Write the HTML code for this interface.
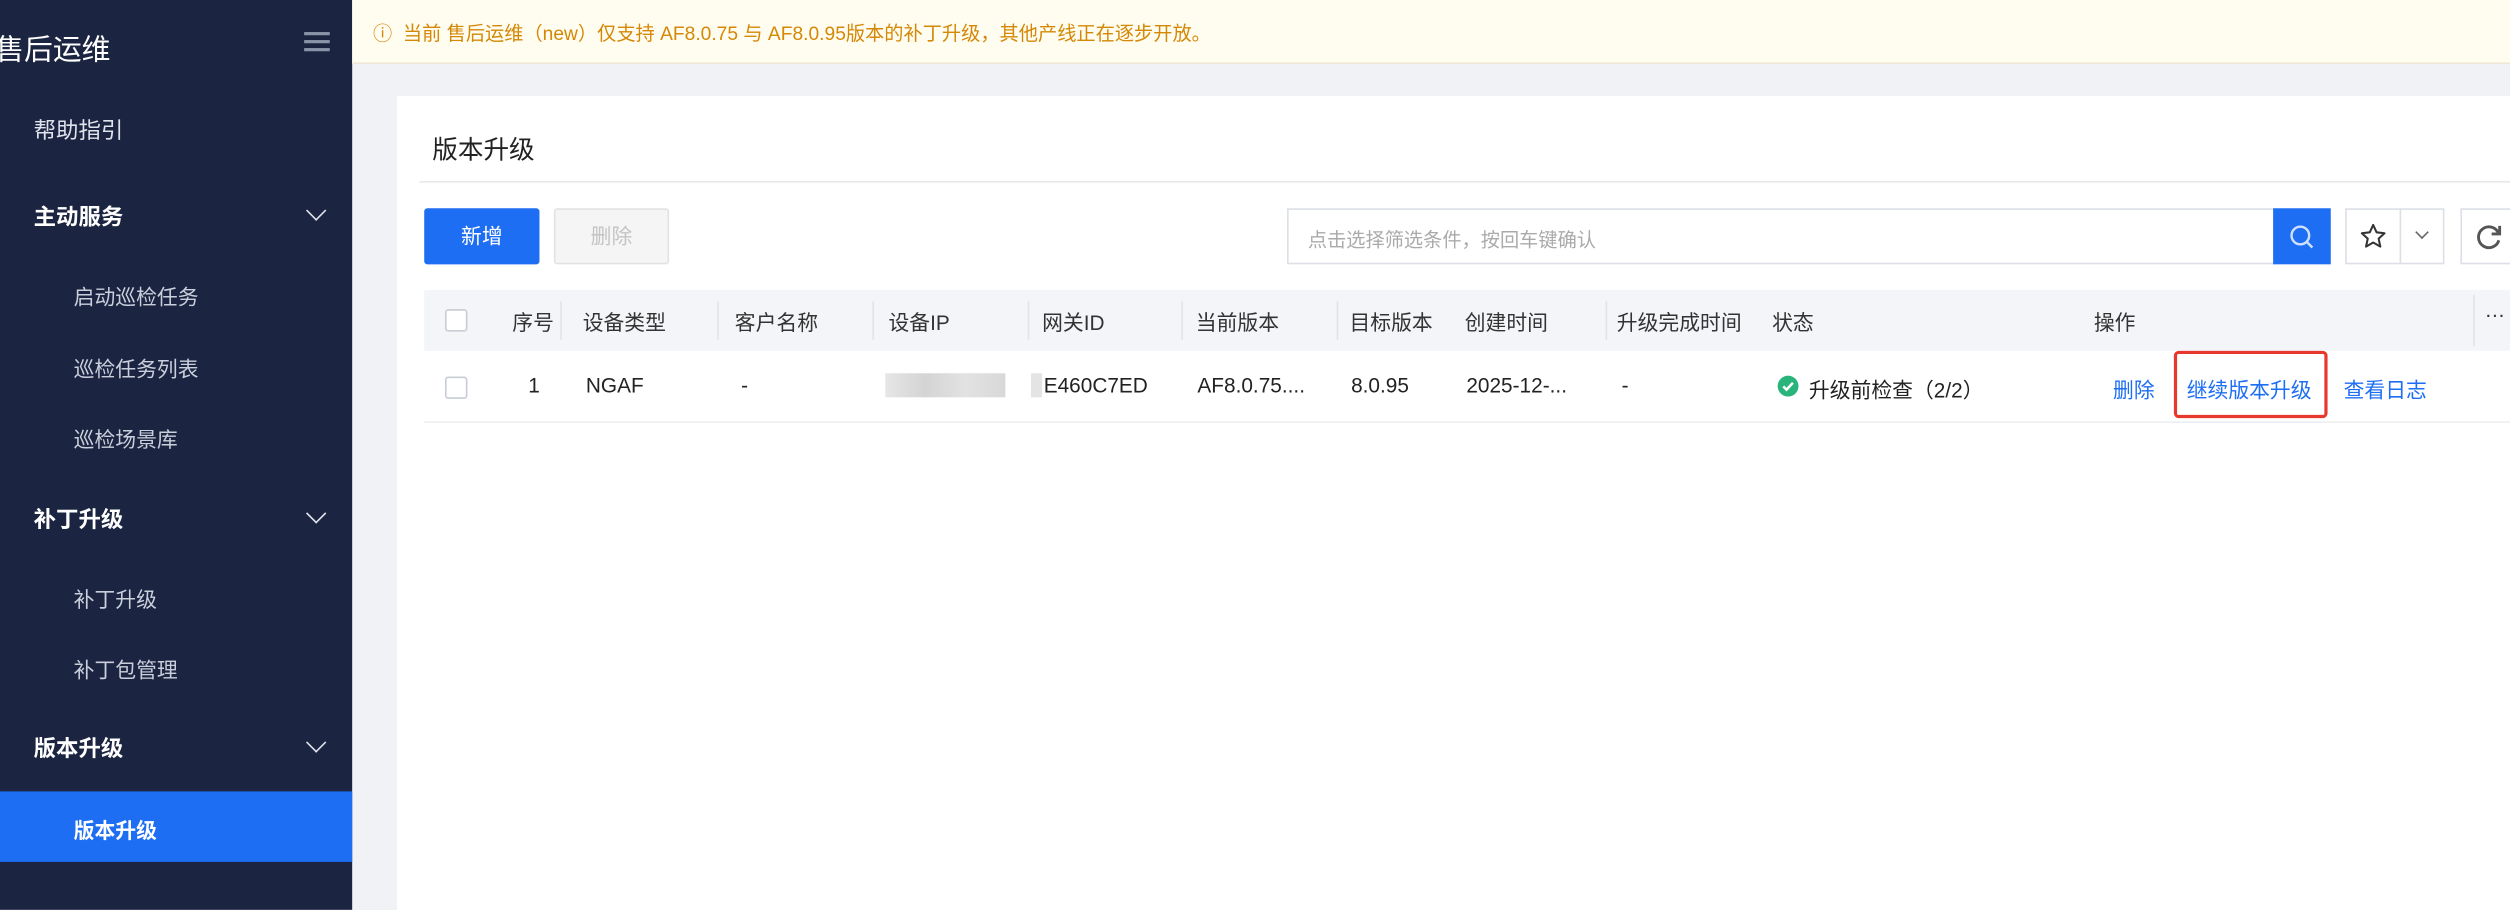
<!DOCTYPE html>
<html><head><meta charset="utf-8"><style>
*{box-sizing:border-box;margin:0;padding:0}
body{width:2510px;height:910px;overflow:hidden;background:#f0f2f5;font-family:"Liberation Sans","Noto Sans CJK SC",sans-serif}
#w{width:1568px;height:568px;transform:scale(1.6008,1.602);transform-origin:0 0;position:relative;background:#f0f2f5;overflow:hidden}
.a{position:absolute;white-space:nowrap}
#sb{left:0;top:0;width:220px;height:568px;background:#1b2440;color:#e8ebf2}
.mi{position:absolute;left:21px;font-size:14px;color:#dfe3ec}
.hd{font-weight:bold;color:#fff}
.sub{left:46px;font-size:13px;color:#c9cfdc}
.chev{position:absolute;left:193px;width:9px;height:9px;border-right:1.6px solid #dfe3ec;border-bottom:1.6px solid #dfe3ec;transform:rotate(45deg)}
.th{position:absolute;top:191px;font-size:13px;color:#333}
.td{position:absolute;top:233px;font-size:13px;color:#222}
.sep{position:absolute;top:188px;width:1px;height:24px;background:#e0e3e8}
.cb{position:absolute;width:14px;height:14px;border:1px solid #c8ccd4;border-radius:2px;background:#fff}
.lk{position:absolute;top:233px;font-size:13px;color:#1e6ef4}
</style></head><body><div id="w">
<div id="sb" class="a">
 <div class="a" style="left:-3px;top:17px;font-size:18px;color:#fff">售后运维</div>
 <div class="a" style="left:190px;top:20px;width:16px;height:2px;background:#8a93a8;box-shadow:0 5px 0 #8a93a8,0 10px 0 #8a93a8"></div>
 <div class="mi" style="top:71px">帮助指引</div>
 <div class="mi hd" style="top:125px">主动服务</div><div class="chev" style="top:127px"></div>
 <div class="mi sub" style="top:175px">启动巡检任务</div>
 <div class="mi sub" style="top:220px">巡检任务列表</div>
 <div class="mi sub" style="top:264px">巡检场景库</div>
 <div class="mi hd" style="top:314px">补丁升级</div><div class="chev" style="top:316px"></div>
 <div class="mi sub" style="top:364px">补丁升级</div>
 <div class="mi sub" style="top:408px">补丁包管理</div>
 <div class="mi hd" style="top:457px">版本升级</div><div class="chev" style="top:459px"></div>
 <div class="a" style="left:0;top:494px;width:220px;height:44px;background:#1e6ef4"></div>
 <div class="mi sub" style="top:508px;color:#fff;font-weight:bold">版本升级</div>
</div>
<div class="a" style="left:220px;top:0;width:1348px;height:40px;background:#fffcf0;border-bottom:1px solid #eee7d5"></div>
<div class="a" style="left:233px;top:12px;font-size:12px;color:#d48806">ⓘ&nbsp; 当前 售后运维（new）仅支持 AF8.0.75 与 AF8.0.95版本的补丁升级，其他产线正在逐步开放。</div>
<div class="a" style="left:248px;top:60px;width:1330px;height:520px;background:#fff"></div>
<div class="a" style="left:270px;top:80px;font-size:16px;color:#222">版本升级</div>
<div class="a" style="left:262px;top:113px;width:1310px;height:1px;background:#e6e8ec"></div>
<div class="a" style="left:265px;top:130px;width:72px;height:35px;background:#1e6ef4;border-radius:2px;color:#fff;font-size:13px;line-height:35px;text-align:center">新增</div>
<div class="a" style="left:346px;top:130px;width:72px;height:35px;background:#f5f5f5;border:1px solid #e2e2e2;border-radius:2px;color:#c4c4c4;font-size:13px;line-height:33px;text-align:center">删除</div>
<div class="a" style="left:804px;top:130px;width:617px;height:35px;border:1px solid #dcdfe6;background:#fff"></div>
<div class="a" style="left:817px;top:141px;font-size:12px;color:#aaa">点击选择筛选条件，按回车键确认</div>
<div class="a" style="left:1420px;top:130px;width:36px;height:35px;background:#1e6ef4"></div>
<svg class="a" style="left:1429px;top:139px" width="18" height="18" viewBox="0 0 18 18"><circle cx="8" cy="8" r="5.5" fill="none" stroke="#cfe0ff" stroke-width="1.5"/><path d="M12 12l3.5 3.5" stroke="#cfe0ff" stroke-width="1.5"/></svg>
<div class="a" style="left:1465px;top:130px;width:62px;height:35px;border:1px solid #dcdfe6;background:#fff"></div>
<div class="a" style="left:1499px;top:130px;width:1px;height:35px;background:#dcdfe6"></div>
<svg class="a" style="left:1474px;top:139px" width="17" height="17" viewBox="0 0 24 24"><path d="M12 2l3 6.5 7 .8-5.2 4.8 1.5 7L12 17.5 5.7 21.1l1.5-7L2 9.3l7-.8z" fill="none" stroke="#333" stroke-width="1.8" stroke-linejoin="round"/></svg>
<div class="a" style="left:1510px;top:142px;width:6px;height:6px;border-right:1px solid #666;border-bottom:1px solid #666;transform:rotate(45deg)"></div>
<div class="a" style="left:1537px;top:130px;width:40px;height:35px;border:1px solid #dcdfe6;background:#fff"></div>
<svg class="a" style="left:1546px;top:139px" width="18" height="18" viewBox="0 0 18 18"><path d="M14.5 6A6.5 6.5 0 1 0 15 11" fill="none" stroke="#555" stroke-width="1.8"/><path d="M15.5 2v5h-5" fill="none" stroke="#555" stroke-width="1.8"/></svg>
<div class="a" style="left:265px;top:181px;width:1303px;height:38px;background:#f3f5f8"></div>
<div class="cb" style="left:278px;top:193px"></div>
<div class="th" style="left:320px">序号</div><div class="sep" style="left:350px"></div>
<div class="th" style="left:364px">设备类型</div><div class="sep" style="left:448px"></div>
<div class="th" style="left:459px">客户名称</div><div class="sep" style="left:545px"></div>
<div class="th" style="left:555px">设备IP</div><div class="sep" style="left:642px"></div>
<div class="th" style="left:651px">网关ID</div><div class="sep" style="left:738px"></div>
<div class="th" style="left:747px">当前版本</div><div class="sep" style="left:835px"></div>
<div class="th" style="left:843px">目标版本</div>
<div class="th" style="left:915px">创建时间</div><div class="sep" style="left:1003px"></div>
<div class="th" style="left:1010px">升级完成时间</div>
<div class="th" style="left:1107px">状态</div>
<div class="th" style="left:1308px">操作</div><div class="sep" style="left:1545px;top:184px;height:32px"></div>
<div class="th" style="left:1552px;top:186px">…</div>
<div class="a" style="left:265px;top:263px;width:1303px;height:1px;background:#eceef2"></div>
<div class="cb" style="left:278px;top:235px"></div>
<div class="td" style="left:330px">1</div>
<div class="td" style="left:366px">NGAF</div>
<div class="td" style="left:463px">-</div>
<div class="a" style="left:553px;top:233px;width:75px;height:15px;background:linear-gradient(90deg,#e6e6e6,#d4d4d4,#e2e2e2,#d8d8d8)"></div>
<div class="a" style="left:644px;top:233px;width:7px;height:15px;background:#e4e4e4"></div>
<div class="td" style="left:652px">E460C7ED</div>
<div class="td" style="left:748px">AF8.0.75....</div>
<div class="td" style="left:844px">8.0.95</div>
<div class="td" style="left:916px">2025-12-...</div>
<div class="td" style="left:1013px">-</div>
<svg class="a" style="left:1110px;top:234px" width="14" height="14" viewBox="0 0 14 14"><circle cx="7" cy="7" r="6.5" fill="#28b47a"/><path d="M4 7.2l2 2 4-4.2" fill="none" stroke="#fff" stroke-width="1.6"/></svg>
<div class="td" style="left:1130px">升级前检查（2/2）</div>
<div class="lk" style="left:1320px">删除</div>
<div class="a" style="left:1358px;top:219px;width:96px;height:42px;border:2px solid #e8382e;border-radius:3px"></div>
<div class="lk" style="left:1366px">继续版本升级</div>
<div class="lk" style="left:1464px">查看日志</div>
</div></body></html>
